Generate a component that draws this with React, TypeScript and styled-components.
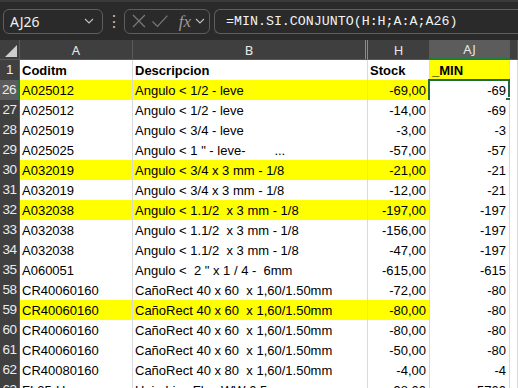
import { FC } from "react"
import styled, { createGlobalStyle } from "styled-components"

const GlobalStyle = createGlobalStyle`
  html, body {
    margin: 0;
    padding: 0;
    width: 518px;
    height: 388px;
    overflow: hidden;
    background: #ffffff;
  }
`

type Row = {
  n: number
  a: string
  b: string
  h: string
  aj: string
  fill?: boolean
  bold?: boolean
}

const rows: Row[] = [
  { n: 1, a: "Coditm", b: "Descripcion", h: "Stock", aj: "_MIN", bold: true },
  { n: 26, a: "A025012", b: "Angulo < 1/2 - leve", h: "-69,00", aj: "-69", fill: true },
  { n: 27, a: "A025012", b: "Angulo < 1/2 - leve", h: "-14,00", aj: "-69" },
  { n: 28, a: "A025019", b: "Angulo < 3/4 - leve", h: "-3,00", aj: "-3" },
  { n: 29, a: "A025025", b: 'Angulo < 1 " - leve-        ...', h: "-57,00", aj: "-57" },
  { n: 30, a: "A032019", b: "Angulo < 3/4 x 3 mm - 1/8", h: "-21,00", aj: "-21", fill: true },
  { n: 31, a: "A032019", b: "Angulo < 3/4 x 3 mm - 1/8", h: "-12,00", aj: "-21" },
  { n: 32, a: "A032038", b: "Angulo < 1.1/2  x 3 mm - 1/8", h: "-197,00", aj: "-197", fill: true },
  { n: 33, a: "A032038", b: "Angulo < 1.1/2  x 3 mm - 1/8", h: "-156,00", aj: "-197" },
  { n: 34, a: "A032038", b: "Angulo < 1.1/2  x 3 mm - 1/8", h: "-47,00", aj: "-197" },
  { n: 35, a: "A060051", b: 'Angulo <  2 " x 1 / 4 -  6mm', h: "-615,00", aj: "-615" },
  { n: 58, a: "CR40060160", b: "CañoRect 40 x 60  x 1,60/1.50mm", h: "-72,00", aj: "-80" },
  { n: 59, a: "CR40060160", b: "CañoRect 40 x 60  x 1,60/1.50mm", h: "-80,00", aj: "-80", fill: true },
  { n: 60, a: "CR40060160", b: "CañoRect 40 x 60  x 1,60/1.50mm", h: "-80,00", aj: "-80" },
  { n: 61, a: "CR40060160", b: "CañoRect 40 x 60  x 1,60/1.50mm", h: "-50,00", aj: "-80" },
  { n: 62, a: "CR40080160", b: "CañoRect 40 x 80  x 1,60/1.50mm", h: "-4,00", aj: "-4" },
  { n: 63, a: "FL25-H", b: "Hoja Lisa Flex WW 0.5", h: "-98,00", aj: "-5700" },
]

const SELECTED_ROW = 26

export default function App() {
  return (
    <>
      <GlobalStyle />
      <Window>
        <FormulaBar>
          <NameBox>
            <span>AJ26</span>
            <Chevron />
          </NameBox>
          <Dots>⋮</Dots>
          <FxBox>
            <svg width="16" height="16" viewBox="0 0 16 16">
              <path d="M2 2 L14 14 M14 2 L2 14" stroke="#7a7a7a" strokeWidth="1.2" fill="none" />
            </svg>
            <svg width="18" height="16" viewBox="0 0 18 16">
              <path d="M1.5 8.5 L6.5 13.5 L16.5 2.5" stroke="#7a7a7a" strokeWidth="1.2" fill="none" />
            </svg>
            <Fx>fx</Fx>
            <Chevron />
          </FxBox>
          <FormulaInput>=MIN.SI.CONJUNTO(H:H;A:A;A26)</FormulaInput>
        </FormulaBar>
        <Sheet>
          <HeaderRow>
            <Corner>
              <svg width="12" height="12" viewBox="0 0 12 12">
                <polygon points="12,0 12,12 0,12" fill="#cfcfcf" />
              </svg>
            </Corner>
            <ColHead>A</ColHead>
            <ColHead $hidden>B</ColHead>
            <ColHead>H</ColHead>
            <ColHead $active>AJ</ColHead>
            <ColHead />
          </HeaderRow>
          {rows.map((r) => (
            <GridRow key={r.n}>
              <RowHead $active={r.n === SELECTED_ROW}>{r.n}</RowHead>
              <Cell $fill={r.fill} $bold={r.bold}>{r.a}</Cell>
              <Cell $fill={r.fill} $bold={r.bold}>{r.b}</Cell>
              <Cell $fill={r.fill} $bold={r.bold} $right={!r.bold}>{r.h}</Cell>
              <Cell $fill={r.bold} $bold={r.bold} $right={!r.bold}>
                {r.aj}
                {r.n === SELECTED_ROW && <Selection><Handle /></Selection>}
              </Cell>
              <Cell />
            </GridRow>
          ))}
        </Sheet>
      </Window>
    </>
  )
}

const Chevron: FC = () => (
  <svg width="10" height="6" viewBox="0 0 10 6">
    <path d="M1 1 L5 5 L9 1" stroke="#bdbdbd" strokeWidth="1.2" fill="none" />
  </svg>
)

const Window = styled.div`
  width: 518px;
  height: 388px;
  overflow: hidden;
  display: flex;
  flex-direction: column;
  background: #ffffff;
`

const FormulaBar = styled.div`
  height: 40px;
  flex-shrink: 0;
  box-sizing: border-box;
  background: #2a2a2a;
  border-top: 2px solid #3a3a3a;
  display: flex;
  align-items: center;
  padding: 0 0 0 3px;
  font-family: "Noto Sans", "Liberation Sans", sans-serif;
`

const BarBox = styled.div`
  height: 25px;
  box-sizing: border-box;
  border: 1px solid #5e5e5e;
  border-radius: 6px;
  display: flex;
  align-items: center;
`

const NameBox = styled(BarBox)`
  width: 100px;
  padding: 0 8px 0 6px;
  justify-content: space-between;
  color: #f0f0f0;
  font-size: 14px;
`

const Dots = styled.div`
  width: 14px;
  text-align: center;
  color: #bdbdbd;
  font-size: 16px;
  margin-left: 3px;
`

const FxBox = styled(BarBox)`
  width: 86px;
  padding: 0 4px 0 6px;
  gap: 4px;
  justify-content: space-between;
  margin-left: 4px;
`

const Fx = styled.span`
  font-family: "Liberation Serif", "DejaVu Serif", serif;
  font-style: italic;
  font-size: 17px;
  color: #9a9a9a;
  margin-left: 6px;
  line-height: 1;
`

const FormulaInput = styled(BarBox)`
  flex: 1;
  margin-left: 4px;
  border-right: none;
  border-radius: 6px 0 0 6px;
  padding-left: 11px;
  font-family: "Liberation Mono", "DejaVu Sans Mono", monospace;
  font-size: 13.3px;
  color: #f2f2f2;
  white-space: pre;
`

const Sheet = styled.div`
  display: flex;
  flex-direction: column;
  font-family: "Liberation Sans", Arial, sans-serif;
`

const columns = "20px 113px 235px 62px 80px 1fr"

const HeaderRow = styled.div`
  display: grid;
  grid-template-columns: ${columns};
  height: 20px;
  background: #3f3f3f;
`

const Corner = styled.div`
  display: flex;
  align-items: flex-end;
  justify-content: flex-end;
  padding: 0 2px 2px 0;
  border-right: 1px solid #5a5a5a;
  border-bottom: 1px solid #5a5a5a;
`

const ColHead = styled.div<{ $active?: boolean; $hidden?: boolean }>`
  display: flex;
  align-items: center;
  justify-content: center;
  box-sizing: border-box;
  font-family: "Noto Sans", "Liberation Sans", sans-serif;
  font-size: 13px;
  color: #e8e8e8;
  background: ${(p) => (p.$active ? "#5c5c5c" : "#3f3f3f")};
  border-right: ${(p) => (p.$hidden ? "3px double #8a8a8a" : "1px solid #5a5a5a")};
  border-bottom: ${(p) => (p.$active ? "2px solid #1f7a45" : "1px solid #5a5a5a")};
`

const GridRow = styled.div`
  display: grid;
  grid-template-columns: ${columns};
  height: 20px;
  flex-shrink: 0;
`

const RowHead = styled.div<{ $active?: boolean }>`
  box-sizing: border-box;
  background: ${(p) => (p.$active ? "#5c5c5c" : "#404040")};
  color: #ececec;
  font-size: 13.5px;
  line-height: 20px;
  text-align: center;
  overflow: hidden;
  white-space: nowrap;
  border-bottom: 1px solid #5a5a5a;
  border-right: ${(p) => (p.$active ? "2px solid #1f7a45" : "1px solid #5a5a5a")};
  letter-spacing: -0.6px;
`

const Cell = styled.div<{ $fill?: boolean; $bold?: boolean; $right?: boolean }>`
  position: relative;
  box-sizing: border-box;
  background: ${(p) => (p.$fill ? "#ffff00" : "#ffffff")};
  border-right: 1px solid #d9d9d9;
  border-bottom: 1px solid #d9d9d9;
  padding: 0 3px 0 2px;
  font-size: 13px;
  line-height: 21px;
  font-weight: ${(p) => (p.$bold ? 700 : 400)};
  color: #000000;
  text-align: ${(p) => (p.$right ? "right" : "left")};
  white-space: pre;
`

const Selection = styled.div`
  position: absolute;
  inset: -1px -1px -1px -2px;
  border: 2px solid #1f6b3f;
  pointer-events: none;
`

const Handle = styled.div`
  position: absolute;
  right: -5px;
  bottom: -5px;
  width: 6px;
  height: 6px;
  background: #1f6b3f;
  border: 1px solid #ffffff;
`
